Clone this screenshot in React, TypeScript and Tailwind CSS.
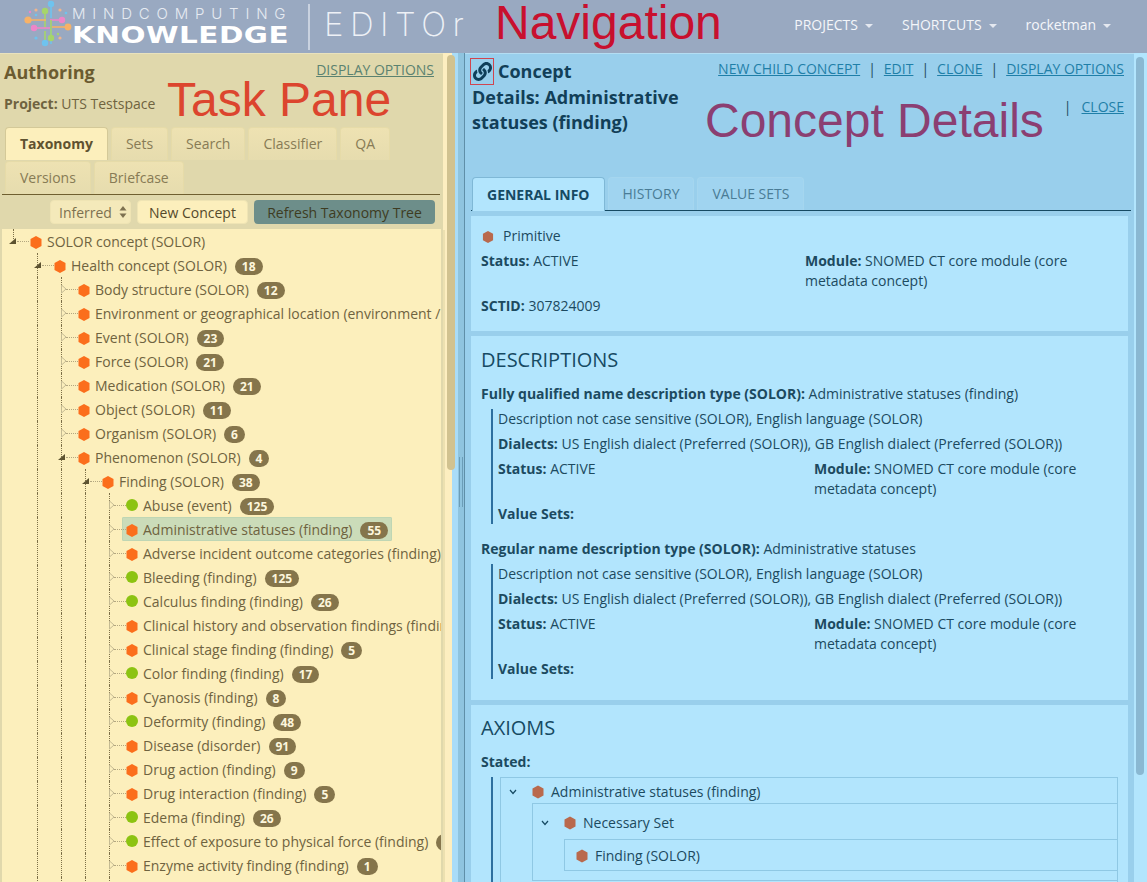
import { FC, ReactNode } from "react"
import { FaLink } from "react-icons/fa"

type Node = { d: number; label: string; n?: number; c?: "o" | "g"; open?: boolean; sel?: boolean }

const tree: Node[] = [
  { d: 0, label: "SOLOR concept (SOLOR)", open: true },
  { d: 1, label: "Health concept (SOLOR)", n: 18, open: true },
  { d: 2, label: "Body structure (SOLOR)", n: 12 },
  { d: 2, label: "Environment or geographical location (environment / location)" },
  { d: 2, label: "Event (SOLOR)", n: 23 },
  { d: 2, label: "Force (SOLOR)", n: 21 },
  { d: 2, label: "Medication (SOLOR)", n: 21 },
  { d: 2, label: "Object (SOLOR)", n: 11 },
  { d: 2, label: "Organism (SOLOR)", n: 6 },
  { d: 2, label: "Phenomenon (SOLOR)", n: 4, open: true },
  { d: 3, label: "Finding (SOLOR)", n: 38, open: true },
  { d: 4, label: "Abuse (event)", n: 125, c: "g" },
  { d: 4, label: "Administrative statuses (finding)", n: 55, sel: true },
  { d: 4, label: "Adverse incident outcome categories (finding)" },
  { d: 4, label: "Bleeding (finding)", n: 125, c: "g" },
  { d: 4, label: "Calculus finding (finding)", n: 26, c: "g" },
  { d: 4, label: "Clinical history and observation findings (finding)" },
  { d: 4, label: "Clinical stage finding (finding)", n: 5 },
  { d: 4, label: "Color finding (finding)", n: 17, c: "g" },
  { d: 4, label: "Cyanosis (finding)", n: 8 },
  { d: 4, label: "Deformity (finding)", n: 48, c: "g" },
  { d: 4, label: "Disease (disorder)", n: 91 },
  { d: 4, label: "Drug action (finding)", n: 9 },
  { d: 4, label: "Drug interaction (finding)", n: 5 },
  { d: 4, label: "Edema (finding)", n: 26, c: "g" },
  { d: 4, label: "Effect of exposure to physical force (finding)", n: 12, c: "g" },
  { d: 4, label: "Enzyme activity finding (finding)", n: 1 },
  { d: 4, label: "Equipment finding (finding)", n: 3 },
]

const Hex: FC<{ color: string; className?: string }> = ({ color, className }) => (
  <svg viewBox="0 0 12 13" className={className} fill={color}>
    <polygon points="6,0 11.5,3 11.5,10 6,13 0.5,10 0.5,3" />
  </svg>
)

const TreeRow: FC<{ node: Node }> = ({ node }) => {
  const guides = Array.from({ length: node.d })
  return (
    <div className="flex h-6 shrink-0 items-center pl-[11px] whitespace-nowrap">
      {guides.map((_, i) => (
        <div key={i} className={`h-6 w-6 shrink-0 ${i === 0 ? "" : "border-l border-dotted border-[#7d7048]"}`} />
      ))}
      <div className={`relative flex h-6 w-[13px] shrink-0 items-center ${node.d > 0 ? "border-l border-dotted border-[#7d7048]" : ""}`}>
        {node.d === 0 && <div className="absolute top-0 left-0 h-2.5 border-l border-dotted border-[#7d7048]" />}
        <div className="absolute left-1 h-0 w-3 border-t border-dotted border-[#b3a780]" />
        {node.open ? (
          <svg viewBox="0 0 8 8" className="absolute -left-1 h-2 w-2" fill="#5c5230">
            <polygon points="7,1 7,7 0,7" />
          </svg>
        ) : (
          <svg viewBox="0 0 6 10" className="absolute -left-px h-2.5 w-1.5" fill="#fcefbc" stroke="#c4ba92">
            <polygon points="0.5,1 5,5 0.5,9" />
          </svg>
        )}
      </div>
      <div
        className={`flex h-6 items-center ${
          node.sel ? "rounded-[1px] border border-[#bfd6b4] bg-[#cbdcb9] pr-[3px] pl-[3px]" : "pr-1 pl-1"
        }`}>
        {node.c === "g" ? (
          <div className="h-3 w-3 shrink-0 rounded-full bg-[#8cc312]" />
        ) : (
          <Hex color="#fb6e1c" className="mt-0.5 h-[13px] w-3 shrink-0" />
        )}
        <span className="ml-[5px] text-[14px] text-[#6f6340]">{node.label}</span>
        {node.n !== undefined && (
          <span className="mt-0.5 ml-2 rounded-full bg-[#85754b] px-[7px] text-[12px] leading-[17px] font-bold text-[#fdf6dc]">
            {node.n}
          </span>
        )}
      </div>
    </div>
  )
}

const YTab: FC<{ children: ReactNode; active?: boolean }> = ({ children, active }) => (
  <div
    className={`rounded-t-[4px] border px-[14px] text-[14px] leading-[32px] ${
      active
        ? "border-[#d4c998] border-b-0 bg-[#fcefbc] font-bold text-[#5f5230]"
        : "border-[#e6dba8] border-b-0 bg-gradient-to-b from-[#eee2b2] to-[#e6dcae] text-[#877b55]"
    }`}>
    {children}
  </div>
)

const BTab: FC<{ children: ReactNode; active?: boolean }> = ({ children, active }) => (
  <div
    className={`rounded-t-[4px] border border-b-0 px-[14px] text-[14px] ${
      active
        ? "relative z-10 -mb-px border-[#7fb8d6] bg-[#b2e5fd] leading-[33px] font-bold text-[#164a63]"
        : "border-[#a5d6ef] bg-[#a0d4f0] leading-[32px] text-[#4a7c96]"
    }`}>
    {children}
  </div>
)

const Field: FC<{ k: string; children: ReactNode }> = ({ k, children }) => (
  <div>
    <b className="font-bold">{k}</b> {children}
  </div>
)

const DescBlock: FC<{ title: string; value: string }> = ({ title, value }) => (
  <div>
    <div className="leading-[20px]">
      <b className="font-bold">{title}</b> {value}
    </div>
    <div className="mt-[5px] ml-[10px] border-l-2 border-[#2d6f9f] pl-[5px] leading-[20px]">
      <div>Description not case sensitive (SOLOR), English language (SOLOR)</div>
      <div className="mt-[5px]">
        <b className="font-bold">Dialects:</b> US English dialect (Preferred (SOLOR)), GB English dialect (Preferred (SOLOR))
      </div>
      <div className="mt-[5px] flex">
        <div className="w-[316px] shrink-0">
          <Field k="Status:">ACTIVE</Field>
        </div>
        <div className="w-[285px]">
          <Field k="Module:">SNOMED CT core module (core metadata concept)</Field>
        </div>
      </div>
      <div className="mt-[5px]">
        <b className="font-bold">Value Sets:</b>
      </div>
    </div>
  </div>
)

const AxiomRow: FC<{ label: string; chevron?: boolean }> = ({ label, chevron }) => (
  <div className="flex items-center leading-[20px]">
    {chevron && (
      <svg viewBox="0 0 8 6" className="mr-[15px] ml-[8px] h-1.5 w-2" fill="none" stroke="#164a63" strokeWidth="1.2">
        <polyline points="1,1 4,4.5 7,1" />
      </svg>
    )}
    <Hex color="#b9694d" className="h-[14px] w-3 shrink-0" />
    <span className="ml-[7px]">{label}</span>
  </div>
)

const Logo: FC = () => (
  <svg viewBox="0 0 60 54" className="h-[54px] w-[60px] shrink-0">
    <g strokeWidth="1.6" fill="none">
      <path d="M39 6V20M39 32V46" stroke="#6fc3ee" />
      <path d="M33 14V30M33 33V45" stroke="#a6d56a" />
      <path d="M16 22H34" stroke="#f7b267" />
      <path d="M38 22H50" stroke="#ee86c8" />
      <path d="M22 30H38" stroke="#ee86c8" />
      <path d="M40 29H56" stroke="#f7b267" />
      <path d="M39 22V40" stroke="#a6d56a" />
    </g>
    <circle cx="39" cy="6" r="3.2" fill="#6fc3ee" />
    <circle cx="33" cy="13" r="3.2" fill="#a6d56a" />
    <circle cx="16" cy="22" r="3.6" fill="#f7b267" />
    <circle cx="50" cy="22" r="3.2" fill="#ee86c8" />
    <circle cx="22" cy="30" r="3.2" fill="#ee86c8" />
    <circle cx="56" cy="29" r="3.4" fill="#f7b267" />
    <circle cx="39" cy="40" r="3.2" fill="#a6d56a" />
    <circle cx="33" cy="45" r="3.2" fill="#6fc3ee" />
    <circle cx="24" cy="12" r="1.6" fill="#f0b48c" />
    <circle cx="48" cy="12" r="1.6" fill="#f0b48c" />
    <circle cx="24" cy="17" r="1.3" fill="#6fc3ee" />
    <circle cx="54" cy="15" r="1.3" fill="#6fc3ee" />
    <circle cx="24" cy="40" r="1.6" fill="#6fc3ee" />
    <circle cx="48" cy="40" r="1.6" fill="#f0b48c" />
    <circle cx="18" cy="14" r="1.2" fill="#ee86c8" />
    <circle cx="46" cy="36" r="1.2" fill="#a6d56a" />
  </svg>
)

const Caret: FC = () => (
  <span className="ml-[7px] inline-block border-x-4 border-t-4 border-x-transparent border-t-[#e4e8f0] align-middle" />
)

export default function App() {
  return (
    <div className="relative flex h-[882px] w-[1147px] flex-col overflow-hidden font-['Open_Sans',sans-serif] text-[14px]">
      <header className="flex h-[53px] shrink-0 items-center bg-[#99a9c1]">
        <div className="w-[13px] shrink-0" />
        <div className="-mt-1 -ml-[1px]">
          <Logo />
        </div>
        <div className="flex w-[222px] shrink-0 flex-col">
          <span className="font-['Inter',sans-serif] text-[15px] leading-[17px] font-light tracking-[6.8px] text-[#e6ebf2]">
            MINDCOMPUTING
          </span>
          <span className="mt-[1px] origin-left scale-x-[1.28] font-['DejaVu_Sans',sans-serif] text-[23px] leading-[25px] font-bold tracking-[0.4px] text-white">
            KNOWLEDGE
          </span>
        </div>
        <div className="ml-[14px] h-[46px] w-[2px] shrink-0 bg-[#c9d2e0]" />
        <span className="-mt-1 ml-[14px] font-['Inter',sans-serif] text-[33px] font-extralight tracking-[6.5px] text-[#eef1f6]">
          EDITOr
        </span>
        <div className="ml-auto flex items-center gap-[29px] pr-[36px] pb-1 text-[#f4f6fa]">
          <span>
            PROJECTS
            <Caret />
          </span>
          <span>
            SHORTCUTS
            <Caret />
          </span>
          <span>
            rocketman
            <Caret />
          </span>
        </div>
      </header>

      <div className="flex min-h-0 flex-1">
        {/* task pane */}
        <div className="relative flex w-[452px] shrink-0">
          <div className="flex w-[443px] shrink-0 flex-col border-t border-[#e9e2bd] bg-[#e0d8ac]">
            <div className="flex items-start justify-between pt-[6px] pr-[9px] pl-1">
              <div className="text-[18px] leading-[25px] font-bold text-[#6b5b30]">Authoring</div>
              <a className="text-[14px] leading-[20px] text-[#5b8270] underline">DISPLAY OPTIONS</a>
            </div>
            <div className="mt-[9px] pl-1 leading-[20px] text-[#6f6340]">
              <b className="font-bold">Project:</b> UTS Testspace
            </div>
            <div className="mt-[13px] flex flex-wrap gap-x-[3px] gap-y-px pr-[40px] pl-[5px]">
              <YTab active>Taxonomy</YTab>
              <YTab>Sets</YTab>
              <YTab>Search</YTab>
              <YTab>Classifier</YTab>
              <YTab>QA</YTab>
              <YTab>Versions</YTab>
              <YTab>Briefcase</YTab>
            </div>
            <div className="mx-[2px] h-px w-[438px] bg-[#6f5f30]" />
            <div className="mt-[5px] flex h-6 items-stretch justify-end gap-[6px] pr-[8px]">
              <div className="flex w-[81px] items-center justify-between rounded-[4px] border border-[#efe4b4] bg-[#f4e9ba] pr-[3px] pl-[8px] text-[#7d7150]">
                Inferred
                <svg viewBox="0 0 8 14" className="h-3.5 w-2" fill="#7d7150">
                  <polygon points="4,1 7.5,5.5 0.5,5.5" />
                  <polygon points="4,13 7.5,8.5 0.5,8.5" />
                </svg>
              </div>
              <div className="flex w-[111px] items-center justify-center rounded-[4px] border border-[#efe4b4] bg-[#fcefbc] text-[#54492a]">
                New Concept
              </div>
              <div className="flex w-[181px] items-center justify-center rounded-[4px] bg-[#6d8e8a] text-[#3e3c22]">
                Refresh Taxonomy Tree
              </div>
            </div>
            <div className="mx-[2px] mt-[5px] flex min-h-0 w-[439px] flex-1 flex-col overflow-hidden bg-[#fcefbc]">
              {tree.map((n) => (
                <TreeRow key={n.label} node={n} />
              ))}
            </div>
          </div>
          <div className="w-[9px] shrink-0 bg-[#fdeec0]">
            <div className="mt-[177px] h-[652px] w-[2px] bg-[#ece0b0]" />
          </div>
          <div className="absolute top-[2px] left-[447px] h-[415px] w-2 rounded-full bg-[#d1c290]" />
        </div>

        {/* splitter */}
        <div className="flex w-[13px] shrink-0">
          <div className="w-[6px] bg-[#a9dcf8]" />
          <div className="flex w-[6px] justify-center gap-[2px] bg-[#8fc4df]">
            <div className="mt-[404px] h-[50px] w-px bg-[#6b9db8]" />
            <div className="mt-[404px] h-[50px] w-px bg-[#6b9db8]" />
          </div>
          <div className="w-px bg-[#5f8fa8]" />
        </div>

        {/* concept details */}
        <div className="relative flex min-w-0 flex-1">
          <div className="flex w-[669px] shrink-0 flex-col border-t border-[#b4ddf2] bg-[#99cfec] text-[#1c4a60]">
            <div className="flex h-[123px] shrink-0">
              <div className="w-[225px] shrink-0 pt-[3px] pl-[7px] text-[18px] leading-[25px] font-bold text-[#123f58]">
                <span className="mr-[4px] -ml-[2px] inline-flex h-[27px] w-[24px] items-center justify-center border border-[#d0454f] align-middle">
                  <FaLink className="h-[19px] w-[19px] text-[#0f3f5a]" />
                </span>
                <span className="align-middle">Concept</span>
                <br />
                Details: Administrative statuses (finding)
              </div>
              <div className="flex flex-1 flex-col items-end pt-[5px] pr-[10px] leading-[20px]">
                <div className="flex gap-[8px] text-[#1f7fa8]">
                  <a className="underline">NEW CHILD CONCEPT</a>
                  <span className="text-[#1c4a60]">|</span>
                  <a className="underline">EDIT</a>
                  <span className="text-[#1c4a60]">|</span>
                  <a className="underline">CLONE</a>
                  <span className="text-[#1c4a60]">|</span>
                  <a className="underline">DISPLAY OPTIONS</a>
                </div>
                <div className="mt-[18px] flex gap-[10px] text-[#1f7fa8]">
                  <span className="text-[#1c4a60]">|</span>
                  <a className="underline">CLOSE</a>
                </div>
              </div>
            </div>
            <div className="flex gap-[3px] pl-[7px]">
              <BTab active>GENERAL INFO</BTab>
              <BTab>HISTORY</BTab>
              <BTab>VALUE SETS</BTab>
            </div>
            <div className="ml-[6px] h-px w-[660px] bg-[#164a63]" />
            <div className="mt-[5px] ml-[6px] flex w-[657px] flex-col gap-[5px] overflow-hidden">
              <section className="h-[115px] shrink-0 bg-[#b2e5fd] px-[10px] pt-[10px] leading-[20px]">
                <div className="flex items-center">
                  <Hex color="#b9694d" className="mt-0.5 ml-px h-3 w-3 shrink-0" />
                  <span className="ml-[9px]">Primitive</span>
                </div>
                <div className="mt-[5px] flex">
                  <div className="w-[324px] shrink-0">
                    <Field k="Status:">ACTIVE</Field>
                  </div>
                  <div className="w-[300px]">
                    <Field k="Module:">SNOMED CT core module (core metadata concept)</Field>
                  </div>
                </div>
                <div className="mt-[5px]">
                  <Field k="SCTID:">307824009</Field>
                </div>
              </section>
              <section className="h-[364px] shrink-0 bg-[#b2e5fd] px-[10px] pt-[10px]">
                <h2 className="text-[20px] leading-[28px] text-[#164a63]">DESCRIPTIONS</h2>
                <div className="mt-[10px]">
                  <DescBlock title="Fully qualified name description type (SOLOR):" value="Administrative statuses (finding)" />
                </div>
                <div className="mt-[15px]">
                  <DescBlock title="Regular name description type (SOLOR):" value="Administrative statuses" />
                </div>
              </section>
              <section className="h-[178px] shrink-0 bg-[#b2e5fd] px-[10px] pt-[9px]">
                <h2 className="text-[20px] leading-[28px] text-[#164a63]">AXIOMS</h2>
                <div className="mt-[10px] leading-[20px] font-bold">Stated:</div>
                <div className="mt-[5px] ml-[10px] h-[110px] border-l-2 border-[#2d6f9f] pl-[7px]">
                  <div className="h-[120px] w-[618px] border border-[#8fc8e4] pt-[4px]">
                    <AxiomRow label="Administrative statuses (finding)" chevron />
                    <div className="mt-[1px] ml-[31px] h-[78px] border border-r-0 border-[#8fc8e4] pt-[9px]">
                      <AxiomRow label="Necessary Set" chevron />
                      <div className="mt-[6px] ml-[31px] h-[32px] border border-r-0 border-[#8fc8e4] pt-[6px] pl-[11px]">
                        <AxiomRow label="Finding (SOLOR)" />
                      </div>
                    </div>
                  </div>
                </div>
              </section>
            </div>
          </div>
          <div className="flex-1 bg-[#b2e5fd]" />
          <div className="absolute top-[4px] left-[671px] h-[718px] w-2 rounded-full bg-[#8ab8d2]" />
        </div>
      </div>

      {/* annotation labels drawn over the screenshot */}
      <span className="absolute top-[-5px] left-[495px] font-['Liberation_Sans',sans-serif] text-[48px] leading-[55px] text-[#c8102e]">
        Navigation
      </span>
      <span className="absolute top-[72px] left-[167px] font-['Liberation_Sans',sans-serif] text-[48px] leading-[55px] text-[#dc452e]">
        Task Pane
      </span>
      <span className="absolute top-[92px] left-[705px] font-['Liberation_Sans',sans-serif] text-[48px] leading-[57px] text-[#8b3f72]">
        Concept Details
      </span>
    </div>
  )
}
